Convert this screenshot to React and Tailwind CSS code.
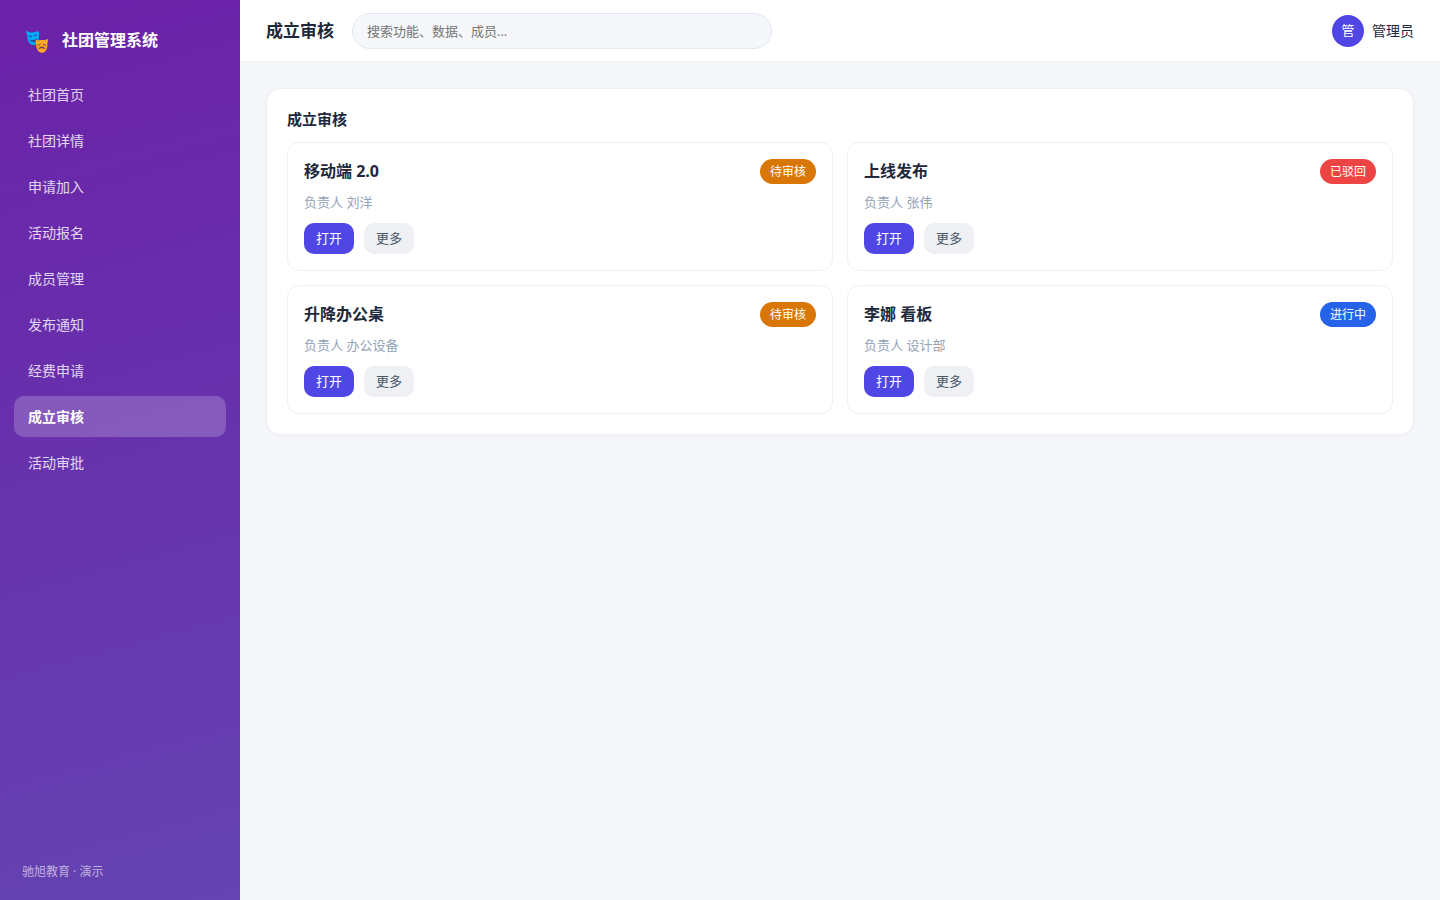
const navItems = [
  '社团首页',
  '社团详情',
  '申请加入',
  '活动报名',
  '成员管理',
  '发布通知',
  '经费申请',
  '成立审核',
  '活动审批',
];

const statusColors = {
  待审核: 'bg-[#d97706]',
  已驳回: 'bg-[#ef4444]',
  进行中: 'bg-[#2563eb]',
};

const reviews = [
  { title: '移动端 2.0', owner: '刘洋', status: '待审核' },
  { title: '上线发布', owner: '张伟', status: '已驳回' },
  { title: '升降办公桌', owner: '办公设备', status: '待审核' },
  { title: '李娜 看板', owner: '设计部', status: '进行中' },
];

function MasksIcon() {
  return (
    <svg viewBox="0 0 26 26" className="size-[26px] shrink-0" aria-hidden="true">
      <path
        d="M1 4.200 C2.500 4.400 3.500 4.200 4.500 5.200 C7 6 9 5.400 10.500 4.800 C12 4.200 13 4.400 14 4.200 C14.200 8 14.400 12 12.600 15.200 C11.400 17.200 9.800 18 8 18 C5.400 17.800 3.600 15.800 2.800 13 C2 10.500 2.400 8 2 6.800 C1.200 6 1 5.200 1 4.200 Z"
        fill="#03a9f4"
      />
      <path d="M4 9.800 Q5.600 8.200 7 9.600 M9 9 Q10.600 7.400 12 8.600" stroke="#3b3f9e" strokeWidth="1" fill="none" />
      <path d="M4.200 12.600 Q8.600 14.200 12.200 11.400 Q11.600 15.200 8.400 15.200 Q5.600 15 4.200 12.600Z" fill="#3b3f9e" />
      <path
        d="M10.800 12.800 C12 12.400 12.600 12.800 13.400 13.400 C15.600 13 18 13 20 13.200 C21 12.400 22 12.200 23 12.400 C23.200 14 22.400 15 22.400 16.200 C22.600 19.500 22 22.500 20.200 24.400 C18.600 26.200 15.600 26.200 13.800 24.600 C11.600 22.500 11 19 10.800 12.800 Z"
        fill="#ffa726"
      />
      <path d="M12.600 18 Q14.200 18.600 15.600 17.200 M18 17.200 Q19.400 18.600 21 18" stroke="#7a3a5c" strokeWidth="1" fill="none" />
      <path d="M13.200 22.400 Q14 19.600 16.800 19.600 Q19.800 19.600 20.400 22.400 Q18.800 21.200 16.800 21.200 Q14.800 21.200 13.200 22.400Z" fill="#7a3a5c" />
    </svg>
  );
}

function Sidebar() {
  return (
    <aside className="flex w-60 shrink-0 flex-col bg-[linear-gradient(165deg,#6b21a8,#6443b2)] px-[14px] pt-5 pb-[19px] text-white">
      <div className="flex h-10 items-center gap-[11px] px-[11px]">
        <MasksIcon />
        <span className="text-base font-bold">社团管理系统</span>
      </div>
      <nav className="mt-[14px] flex flex-col gap-[5px]">
        {navItems.map((item) => (
          <a
            key={item}
            href="#"
            aria-current={item === '成立审核' ? 'page' : undefined}
            className={
              item === '成立审核'
                ? 'flex h-[41px] items-center rounded-[10px] bg-white/20 px-[14px] text-sm font-bold'
                : 'flex h-[41px] items-center rounded-[10px] px-[14px] text-sm text-white/80'
            }
          >
            {item}
          </a>
        ))}
      </nav>
      <p className="mt-auto px-2 text-xs leading-[18px] text-white/60">驰旭教育 · 演示</p>
    </aside>
  );
}

function Header() {
  return (
    <header className="flex h-[62px] shrink-0 items-center border-b border-[#eef0f4] bg-white px-[26px]">
      <h1 className="shrink-0 text-[17px] font-bold">成立审核</h1>
      <input
        type="search"
        aria-label="搜索"
        placeholder="搜索功能、数据、成员..."
        className="ml-[18px] h-9 w-full max-w-[420px] rounded-full border border-[#e2e8f0] bg-[#f5f7fb] px-[14px] text-[13px] outline-none placeholder:text-[#757575]"
      />
      <div className="ml-auto flex shrink-0 items-center gap-2 pl-4">
        <span className="flex size-8 items-center justify-center rounded-full bg-[#4f46e5] text-[13px] text-white">管</span>
        <span className="text-sm">管理员</span>
      </div>
    </header>
  );
}

function ReviewCard({ title, owner, status }) {
  return (
    <article className="rounded-xl border border-[#eef0f4] bg-white p-4">
      <div className="flex items-center justify-between">
        <h3 className="text-base leading-[25px] font-bold">{title}</h3>
        <span className={`rounded-full px-[10px] text-xs leading-[25px] text-white ${statusColors[status]}`}>{status}</span>
      </div>
      <p className="mt-2 text-[13px] leading-5 text-[#94a3b8]">负责人 {owner}</p>
      <div className="mt-[11px] flex gap-[10px]">
        <button type="button" className="h-[31px] rounded-[10px] bg-[#4f46e5] px-3 text-[13px] text-white">
          打开
        </button>
        <button type="button" className="h-[31px] rounded-[10px] bg-[#eef0f4] px-3 text-[13px] text-[#475569]">
          更多
        </button>
      </div>
    </article>
  );
}

export default function App() {
  return (
    <div className="flex min-h-screen bg-[#f5f7fb] font-['Open_Sans','Noto_Sans_CJK_SC',sans-serif] text-[#1e293b]">
      <Sidebar />
      <div className="flex min-w-0 flex-1 flex-col">
        <Header />
        <main className="p-[26px]">
          <section className="rounded-[14px] border border-[#eef0f4] bg-white p-5 shadow-[0_1px_4px_rgba(15,23,42,0.04)]">
            <h2 className="text-[15px] leading-5 font-bold">成立审核</h2>
            <div className="mt-[13px] grid grid-cols-2 gap-[14px]">
              {reviews.map((review) => (
                <ReviewCard key={review.title} {...review} />
              ))}
            </div>
          </section>
        </main>
      </div>
    </div>
  );
}
